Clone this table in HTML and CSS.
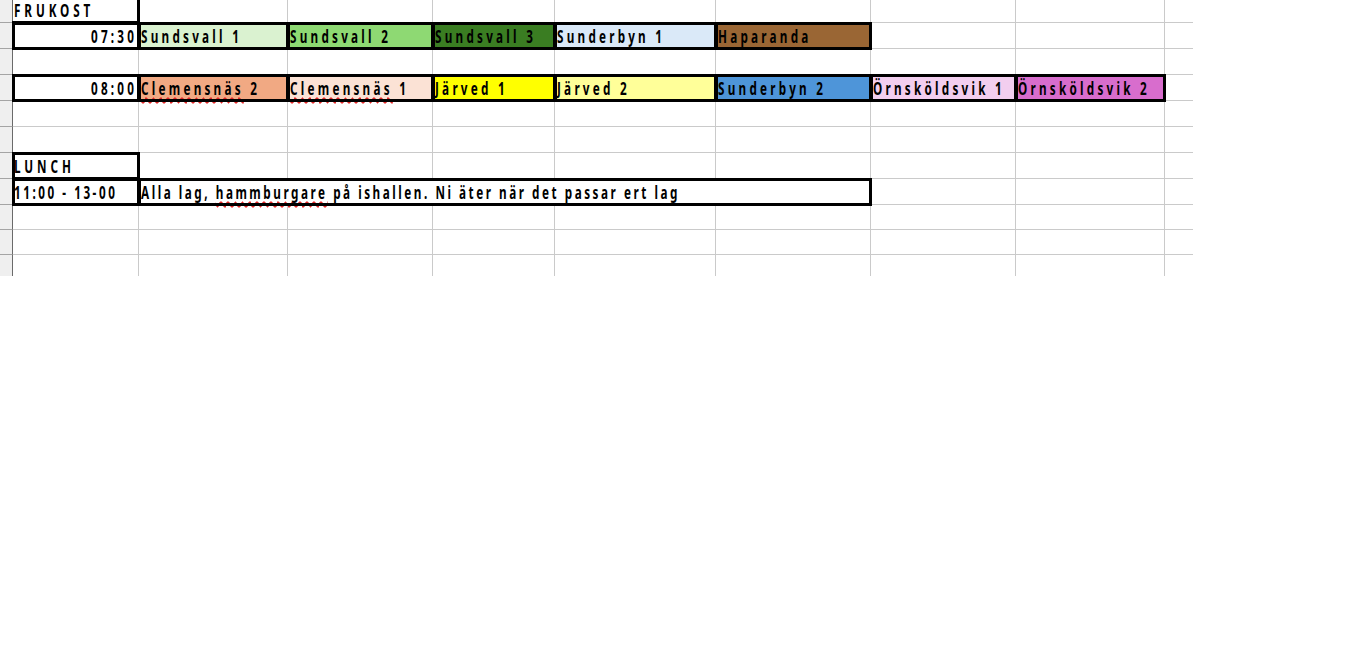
FILE: index.html
```html
<!DOCTYPE html>
<html lang="sv">
<head>
<meta charset="utf-8">
<title>Schema</title>
<link rel="stylesheet" href="styles.css">
</head>
<body>
<div class="sheet">
  <div class="row r-top h22">
    <div class="rh"></div>
    <div class="c a txt lbl caps edge-rb"><span class="v">FRUKOST</span></div>
    <div class="c"></div><div class="c"></div><div class="c"></div><div class="c"></div>
    <div class="c"></div><div class="c"></div><div class="c"></div><div class="c"></div>
  </div>
  <div class="row">
    <div class="rh"></div>
    <div class="c a txt num box"><span class="v">07:30</span></div>
    <div class="c txt box f-s1"><span class="v">Sundsvall 1</span></div>
    <div class="c txt box f-s2"><span class="v">Sundsvall 2</span></div>
    <div class="c txt box f-s3"><span class="v">Sundsvall 3</span></div>
    <div class="c txt box f-sb1"><span class="v">Sunderbyn 1</span></div>
    <div class="c txt box f-hap"><span class="v">Haparanda</span></div>
    <div class="c"></div><div class="c"></div><div class="c"></div>
  </div>
  <div class="row">
    <div class="rh"></div>
    <div class="c a"></div>
    <div class="c"></div><div class="c"></div><div class="c"></div><div class="c"></div>
    <div class="c"></div><div class="c"></div><div class="c"></div><div class="c"></div>
  </div>
  <div class="row">
    <div class="rh"></div>
    <div class="c a txt num box"><span class="v">08:00</span></div>
    <div class="c txt box f-c2"><span class="v"><span class="spell">Clemensnäs</span> 2</span></div>
    <div class="c txt box f-c1"><span class="v"><span class="spell">Clemensnäs</span> 1</span></div>
    <div class="c txt box f-j1"><span class="v">Järved 1</span></div>
    <div class="c txt box f-j2"><span class="v">Järved 2</span></div>
    <div class="c txt box f-sb2"><span class="v">Sunderbyn 2</span></div>
    <div class="c txt box f-o1"><span class="v">Örnsköldsvik 1</span></div>
    <div class="c txt box f-o2"><span class="v">Örnsköldsvik 2</span></div>
    <div class="c"></div>
  </div>
  <div class="row">
    <div class="rh"></div>
    <div class="c a"></div>
    <div class="c"></div><div class="c"></div><div class="c"></div><div class="c"></div>
    <div class="c"></div><div class="c"></div><div class="c"></div><div class="c"></div>
  </div>
  <div class="row">
    <div class="rh"></div>
    <div class="c a"></div>
    <div class="c"></div><div class="c"></div><div class="c"></div><div class="c"></div>
    <div class="c"></div><div class="c"></div><div class="c"></div><div class="c"></div>
  </div>
  <div class="row">
    <div class="rh"></div>
    <div class="c a txt lbl caps box"><span class="v">LUNCH</span></div>
    <div class="c"></div><div class="c"></div><div class="c"></div><div class="c"></div>
    <div class="c"></div><div class="c"></div><div class="c"></div><div class="c"></div>
  </div>
  <div class="row">
    <div class="rh"></div>
    <div class="c a txt lbl tight box"><span class="v">11:00 - 13-00</span></div>
    <div class="c txt box tight span5"><span class="v">Alla lag, <span class="spell">hammburgare</span> på ishallen. Ni äter när det passar ert lag</span></div>
    <div class="c"></div><div class="c"></div><div class="c"></div>
  </div>
  <div class="row h25">
    <div class="rh"></div>
    <div class="c a"></div>
    <div class="c"></div><div class="c"></div><div class="c"></div><div class="c"></div>
    <div class="c"></div><div class="c"></div><div class="c"></div><div class="c"></div>
  </div>
  <div class="row h25">
    <div class="rh"></div>
    <div class="c a"></div>
    <div class="c"></div><div class="c"></div><div class="c"></div><div class="c"></div>
    <div class="c"></div><div class="c"></div><div class="c"></div><div class="c"></div>
  </div>
  <div class="row h22">
    <div class="rh"></div>
    <div class="c a"></div>
    <div class="c"></div><div class="c"></div><div class="c"></div><div class="c"></div>
    <div class="c"></div><div class="c"></div><div class="c"></div><div class="c"></div>
  </div>
</div>
</body>
</html>
```
FILE: styles.css
```css
html, body {
  margin: 0;
  padding: 0;
  background: #ffffff;
}

.sheet {
  display: flex;
  flex-direction: column;
  width: 1193px;
  font-family: "Noto Sans", "Liberation Sans", sans-serif;
  font-weight: 700;
  font-size: 18px;
  letter-spacing: 5px;
  color: #000;
}

.row {
  display: grid;
  grid-template-columns: 13px 125px 149px 145px 122px 161px 155px 145px 149px 29px;
  height: 26px;
}

.row.h25 { height: 25px; }
.row.h22 { height: 22px; }

.rh {
  background: #efefef;
  border-top: 1px solid #a4a4a4;
  border-right: 1px solid #6a6a6a;
  box-sizing: border-box;
}

.c {
  position: relative;
  box-sizing: border-box;
  border-top: 1px solid #cacaca;
  border-left: 1px solid #cacaca;
  min-width: 0;
}

.c.a { border-left: none; }

.r-top .rh,
.r-top .c { border-top: none; }

.txt {
  display: flex;
  align-items: flex-end;
  justify-content: flex-start;
  padding: 0 2px 3px 2px;
  line-height: 18px;
  white-space: nowrap;
}

.txt.lbl { padding-left: 1px; }
.txt.num { justify-content: flex-end; padding-right: 1px; }
.txt.caps { letter-spacing: 6px; }
.txt.tight { letter-spacing: 3.9px; }

/* the sheet's condensed display face is approximated by narrowing a regular face */
.v {
  display: block;
  flex: none;
  transform: scaleX(0.65);
  transform-origin: left bottom;
}

.num .v { transform-origin: right bottom; }

.span5 { grid-column: span 5; }

.box::after,
.edge-rb::after {
  content: "";
  position: absolute;
  top: -1px;
  right: -2px;
  bottom: -2px;
  left: -1px;
  border: 3px solid #000;
  z-index: 1;
  pointer-events: none;
}

.edge-rb::after {
  border-width: 0 3px 3px 0;
}

.spell {
  text-decoration-line: underline;
  text-decoration-style: wavy;
  text-decoration-color: #e02828;
  text-decoration-thickness: 1.5px;
  text-underline-offset: 2px;
  text-decoration-skip-ink: none;
}

.f-s1 { background: #daf2d0; }
.f-s2 { background: #8ed973; }
.f-s3 { background: #3a7d22; }
.f-sb1 { background: #dae9f8; }
.f-hap { background: #9a6634; }
.f-c2 { background: #f1a983; }
.f-c1 { background: #fbe2d5; }
.f-j1 { background: #ffff00; }
.f-j2 { background: #ffff99; }
.f-sb2 { background: #4e95d9; }
.f-o1 { background: #f2ceef; }
.f-o2 { background: #d86dcd; }
```
